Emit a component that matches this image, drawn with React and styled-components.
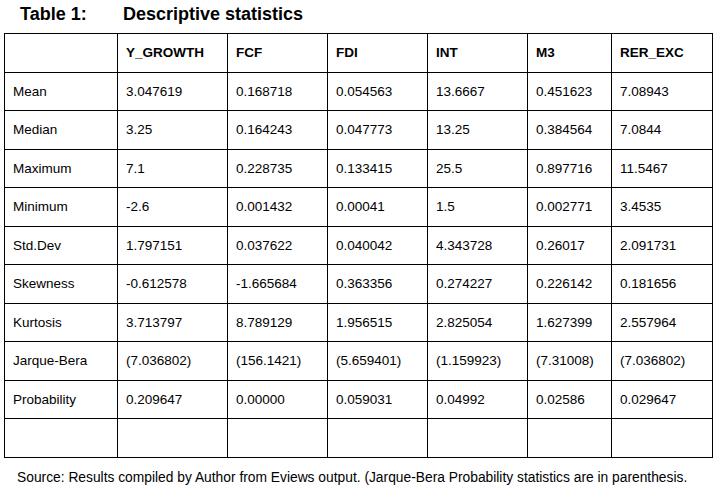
import React from "react";
import styled, { createGlobalStyle } from "styled-components";

const GlobalStyle = createGlobalStyle`
  html, body {
    margin: 0;
    padding: 0;
    background: #fff;
  }
  body {
    font-family: "Liberation Sans", Arial, sans-serif;
    color: #000;
  }
`;

const Page = styled.div`
  width: 718px;
  height: 491px;
  overflow: hidden;
`;

const Title = styled.div`
  display: flex;
  height: 33px;
  align-items: center;
  padding-left: 20px;
  padding-bottom: 5px;
  box-sizing: border-box;
  font-size: 18px;
  font-weight: bold;
`;

const TitleLabel = styled.span`
  width: 103px;
`;

const Table = styled.table`
  margin-left: 4px;
  width: 708px;
  border-collapse: collapse;
  table-layout: fixed;
  font-size: 13.5px;
`;

const Cell = styled.td`
  border: 1px solid #000;
  height: 37.5px;
  padding: 0 0 0 8px;
  vertical-align: middle;
  text-align: left;
  font-weight: ${(p) => (p.$head ? "bold" : "normal")};
  white-space: nowrap;
`;

const Caption = styled.div`
  margin-top: 10px;
  padding-left: 17px;
  font-size: 13.8px;
  line-height: 20px;
  white-space: nowrap;
`;

const widths = [113, 110, 100, 100, 100, 84, 101];
const headers = ["", "Y_GROWTH", "FCF", "FDI", "INT", "M3", "RER_EXC"];

const rows = [
  ["Mean", "3.047619", "0.168718", "0.054563", "13.6667", "0.451623", "7.08943"],
  ["Median", "3.25", "0.164243", "0.047773", "13.25", "0.384564", "7.0844"],
  ["Maximum", "7.1", "0.228735", "0.133415", "25.5", "0.897716", "11.5467"],
  ["Minimum", "-2.6", "0.001432", "0.00041", "1.5", "0.002771", "3.4535"],
  ["Std.Dev", "1.797151", "0.037622", "0.040042", "4.343728", "0.26017", "2.091731"],
  ["Skewness", "-0.612578", "-1.665684", "0.363356", "0.274227", "0.226142", "0.181656"],
  ["Kurtosis", "3.713797", "8.789129", "1.956515", "2.825054", "1.627399", "2.557964"],
  ["Jarque-Bera", "(7.036802)", "(156.1421)", "(5.659401)", "(1.159923)", "(7.31008)", "(7.036802)"],
  ["Probability", "0.209647", "0.00000", "0.059031", "0.04992", "0.02586", "0.029647"],
  ["", "", "", "", "", "", ""],
];

export default function App() {
  return (
    <Page>
      <GlobalStyle />
      <Title>
        <TitleLabel>Table 1:</TitleLabel>
        <span>Descriptive statistics</span>
      </Title>
      <Table>
        <colgroup>
          {widths.map((w, i) => (
            <col key={i} style={{ width: w }} />
          ))}
        </colgroup>
        <thead>
          <tr>
            {headers.map((h, i) => (
              <Cell as="th" key={i} $head>
                {h}
              </Cell>
            ))}
          </tr>
        </thead>
        <tbody>
          {rows.map((r, ri) => (
            <tr key={ri}>
              {r.map((v, ci) => (
                <Cell key={ci}>{v}</Cell>
              ))}
            </tr>
          ))}
        </tbody>
      </Table>
      <Caption>
        Source: Results compiled by Author from Eviews output. (Jarque-Bera Probability statistics are in parenthesis.
      </Caption>
    </Page>
  );
}
